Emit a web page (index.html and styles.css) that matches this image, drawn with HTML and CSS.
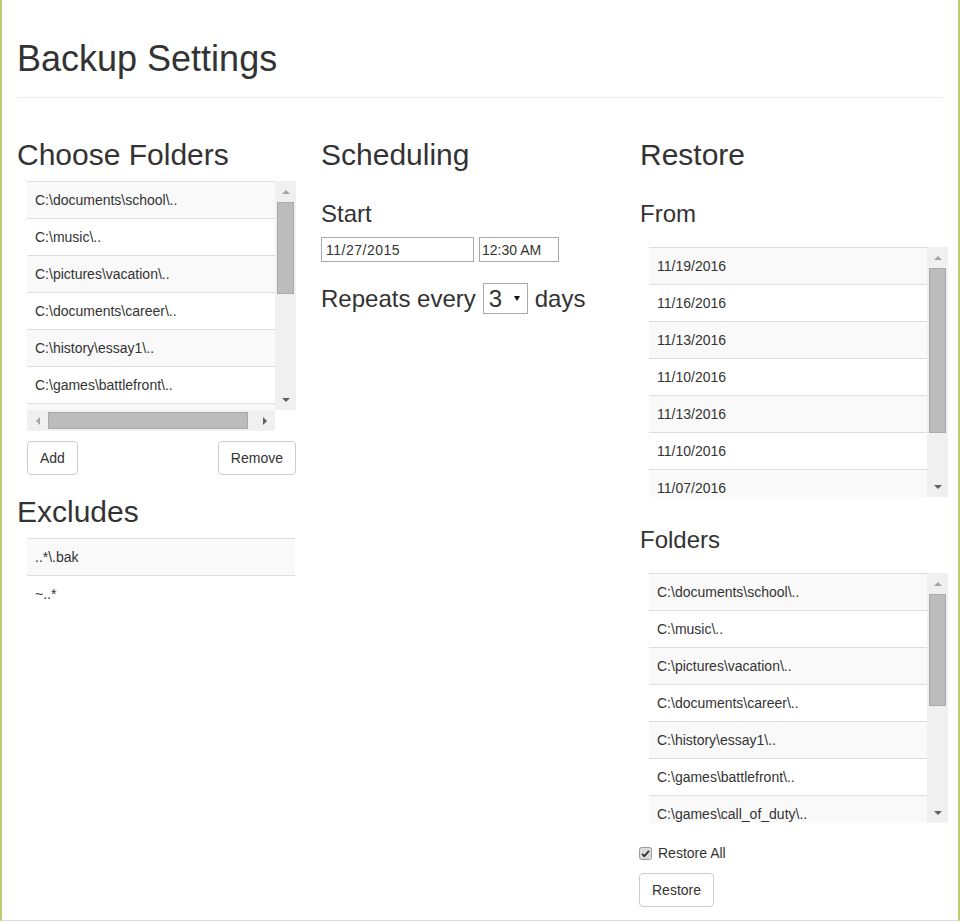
FILE: index.html
```html
<!DOCTYPE html>
<html lang="en">
<head>
<meta charset="utf-8">
<title>Backup Settings</title>
<link rel="stylesheet" href="styles.css">
</head>
<body>
<div class="page">
  <header class="page-header"><h1>Backup Settings</h1></header>
  <div class="columns">
    <section class="col col-folders">
      <h2>Choose Folders</h2>
      <div class="scrollbox has-h">
        <div class="viewport">
          <div class="row">C:\documents\school\..</div>
          <div class="row">C:\music\..</div>
          <div class="row">C:\pictures\vacation\..</div>
          <div class="row">C:\documents\career\..</div>
          <div class="row">C:\history\essay1\..</div>
          <div class="row">C:\games\battlefront\..</div>
          <div class="row">C:\games\call_of_duty\..</div>
        </div>
        <div class="vbar">
          <span class="btn-arrow"><span class="tri tri-up dim"></span></span>
          <span class="vtrack"><span class="thumb vthumb" style="height:92px"></span></span>
          <span class="btn-arrow"><span class="tri tri-down"></span></span>
        </div>
        <div class="hbar">
          <span class="btn-arrow"><span class="tri tri-left dim"></span></span>
          <span class="htrack"><span class="thumb hthumb" style="width:200px"></span></span>
          <span class="btn-arrow"><span class="tri tri-right"></span></span>
        </div>
        <div class="corner"></div>
      </div>
      <div class="btn-row">
        <button class="btn">Add</button>
        <button class="btn">Remove</button>
      </div>
      <h2 class="h2-excludes">Excludes</h2>
      <div class="table excludes">
        <div class="row">..*\.bak</div>
        <div class="row">~..*</div>
      </div>
    </section>

    <section class="col col-schedule">
      <h2>Scheduling</h2>
      <h3>Start</h3>
      <div class="input-row">
        <input class="field field-date" type="text" value="11/27/2015">
        <input class="field field-time" type="text" value="12:30 AM">
      </div>
      <div class="repeat-row">
        <span>Repeats every</span>
        <span class="select">
          <select class="select-native"><option>3</option></select>
          <span class="tri tri-select"></span>
        </span>
        <span>days</span>
      </div>
    </section>

    <section class="col col-restore">
      <h2>Restore</h2>
      <h3>From</h3>
      <div class="scrollbox box-wide">
        <div class="viewport">
          <div class="row">11/19/2016</div>
          <div class="row">11/16/2016</div>
          <div class="row">11/13/2016</div>
          <div class="row">11/10/2016</div>
          <div class="row">11/13/2016</div>
          <div class="row">11/10/2016</div>
          <div class="row">11/07/2016</div>
        </div>
        <div class="vbar">
          <span class="btn-arrow"><span class="tri tri-up dim"></span></span>
          <span class="vtrack"><span class="thumb vthumb" style="height:165px"></span></span>
          <span class="btn-arrow"><span class="tri tri-down"></span></span>
        </div>
      </div>
      <h3 class="h3-folders">Folders</h3>
      <div class="scrollbox box-wide">
        <div class="viewport">
          <div class="row">C:\documents\school\..</div>
          <div class="row">C:\music\..</div>
          <div class="row">C:\pictures\vacation\..</div>
          <div class="row">C:\documents\career\..</div>
          <div class="row">C:\history\essay1\..</div>
          <div class="row">C:\games\battlefront\..</div>
          <div class="row">C:\games\call_of_duty\..</div>
        </div>
        <div class="vbar">
          <span class="btn-arrow"><span class="tri tri-up dim"></span></span>
          <span class="vtrack"><span class="thumb vthumb" style="height:112px"></span></span>
          <span class="btn-arrow"><span class="tri tri-down"></span></span>
        </div>
      </div>
      <label class="checkbox">
        <span class="check" role="checkbox" aria-checked="true">
          <svg width="13" height="13" viewBox="0 0 13 13"><rect x="0.5" y="0.5" width="12" height="12" rx="2" fill="#dcdcdc" stroke="#9a9a9a"/><path d="M3 6.8 L5.3 9.2 L10 3.8" fill="none" stroke="#333" stroke-width="1.8"/></svg>
        </span>
        <span>Restore All</span>
      </label>
      <button class="btn btn-restore">Restore</button>
    </section>
  </div>
</div>
</body>
</html>
```
FILE: styles.css
```css
html, body {
  margin: 0;
  padding: 0;
  background: #fff;
}
body {
  font-family: "Liberation Sans", Arial, sans-serif;
  font-size: 14px;
  line-height: 20px;
  color: #333;
}
.page {
  box-sizing: border-box;
  height: 921px;
  border-left: 2px solid #bfcb74;
  border-right: 2px solid #bfcb74;
  border-bottom: 1px solid #dcdcdc;
  padding: 0 15px;
  display: flow-root;
}
.page-header {
  border-bottom: 1px solid #eee;
  padding-bottom: 8px;
  margin-bottom: 20px;
}
h1 {
  font-size: 36px;
  line-height: 40px;
  font-weight: 500;
  margin: 39px 0 10px;
}
h2 {
  font-size: 30px;
  line-height: 33px;
  font-weight: 500;
  margin: 20px 0 10px;
}
h3 {
  font-size: 24px;
  line-height: 26px;
  font-weight: 500;
  margin: 0;
}
.columns {
  display: grid;
  grid-template-columns: 304px 319px 1fr;
}
.col {
  display: flex;
  flex-direction: column;
  align-items: flex-start;
  min-width: 0;
}
.col h3 {
  margin-top: 20px;
  margin-bottom: 10px;
}

/* scroll boxes */
.scrollbox {
  display: grid;
  grid-template-columns: 1fr 21px;
  grid-template-rows: 250px;
  height: 250px;
}
.scrollbox.has-h {
  grid-template-rows: 229px 21px;
  width: 269px;
  margin-left: 10px;
  margin-bottom: 10px;
}
.scrollbox.box-wide {
  width: 299px;
  margin-left: 9px;
}
.col-restore h3 {
  margin-bottom: 20px;
}
.col-restore .h3-folders {
  margin-top: 30px;
}
.viewport {
  overflow: hidden;
  min-width: 0;
}
.row {
  border-top: 1px solid #ddd;
  padding: 8px;
  line-height: 20px;
  white-space: nowrap;
  background: #fff;
}
.row:nth-child(odd) {
  background: #f9f9f9;
}
.vbar {
  background: #f0f0f0;
  display: flex;
  flex-direction: column;
}
.hbar {
  background: #f0f0f0;
  display: flex;
  flex-direction: row;
}
.corner {
  background: #fff;
}
.btn-arrow {
  flex: 0 0 21px;
  width: 21px;
  height: 21px;
  display: flex;
  align-items: center;
  justify-content: center;
}
.vtrack {
  flex: 1;
  display: flex;
  flex-direction: column;
}
.htrack {
  flex: 1;
  display: flex;
  flex-direction: row;
  align-items: center;
}
.thumb {
  box-sizing: border-box;
  background: #bcbcbc;
  border: 1px solid #a9a9a9;
}
.vthumb {
  margin: 0 2px;
}
.hthumb {
  height: 17px;
}
.tri {
  width: 0;
  height: 0;
  display: block;
}
.tri-up {
  border-left: 4px solid transparent;
  border-right: 4px solid transparent;
  border-bottom: 4px solid #606060;
}
.tri-down {
  border-left: 4px solid transparent;
  border-right: 4px solid transparent;
  border-top: 4px solid #606060;
}
.tri-left {
  border-top: 4px solid transparent;
  border-bottom: 4px solid transparent;
  border-right: 4px solid #606060;
}
.tri-right {
  border-top: 4px solid transparent;
  border-bottom: 4px solid transparent;
  border-left: 4px solid #606060;
}
.tri-up.dim { border-bottom-color: #a3a3a3; }
.tri-left.dim { border-right-color: #a3a3a3; }

/* buttons */
.btn-row {
  display: flex;
  justify-content: space-between;
  width: 269px;
  margin-left: 10px;
}
.btn {
  font-family: inherit;
  font-size: 14px;
  line-height: 20px;
  color: #333;
  background: #fff;
  border: 1px solid #ccc;
  border-radius: 4px;
  padding: 6px 12px;
  height: 34px;
  box-sizing: border-box;
  cursor: pointer;
}
.h2-excludes {
  margin-top: 20px;
}
.table.excludes {
  width: 268px;
  margin-left: 10px;
}

/* scheduling */
.input-row {
  display: flex;
  gap: 5px;
}
.field {
  box-sizing: border-box;
  height: 25px;
  border: 1px solid #a9a9a9;
  font-family: inherit;
  font-size: 14px;
  color: #333;
  margin: 0;
  background: #fff;
}
.field-date {
  width: 153px;
  padding: 0 4px;
  letter-spacing: 0.5px;
}
.field-time {
  width: 80px;
  padding: 0 2px;
}
.repeat-row {
  display: flex;
  align-items: center;
  gap: 7px;
  margin-top: 21px;
  font-size: 24px;
  line-height: 26px;
}
.select {
  box-sizing: border-box;
  display: inline-flex;
  align-items: center;
  width: 45px;
  height: 31px;
  border: 1px solid #a9a9a9;
  background: #fff;
}
.select-native {
  appearance: none;
  -webkit-appearance: none;
  border: 0;
  background: transparent;
  font-family: inherit;
  font-size: 24px;
  color: #333;
  padding: 0 0 0 5px;
  margin: 0;
  width: 26px;
  outline: none;
}
.tri-select {
  border-left: 3px solid transparent;
  border-right: 3px solid transparent;
  border-top: 5px solid #111;
  margin-left: 4px;
}

/* restore */
.checkbox {
  display: flex;
  align-items: center;
  gap: 6px;
  margin-top: 20px;
  margin-bottom: 10px;
  margin-left: -1px;
  line-height: 20px;
}
.check {
  display: flex;
  width: 13px;
  height: 13px;
  margin-top: 1px;
}
.btn-restore {
  margin-left: -1px;
}
```
